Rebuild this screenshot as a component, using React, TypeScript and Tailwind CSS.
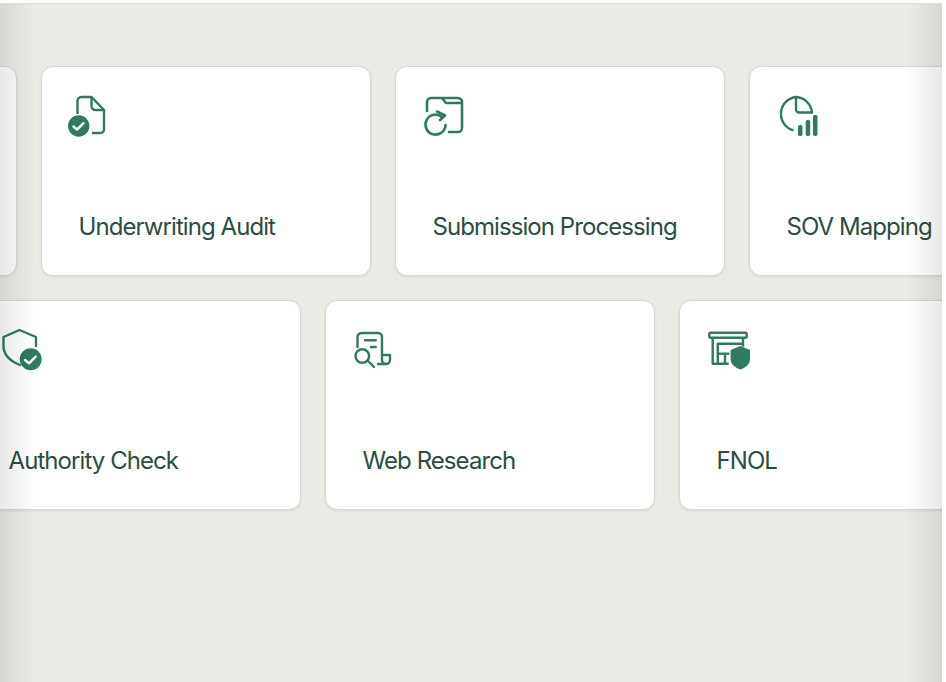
import React from 'react';

const GREEN = '#2f7a61';
const SVG_CLASS = 'overflow-visible';

const DocCheck = () => (
  <svg className={SVG_CLASS} width="44" height="44" viewBox="0 0 44 44" fill="none">
    <path d="M9.500 20V7a4 4 0 0 1 4-4h10l12.500 13v19.500a3.500 3.500 0 0 1-3.500 3.500H24" stroke={GREEN} strokeWidth="2.400" strokeLinejoin="round" />
    <path d="M23.500 3v9a4 4 0 0 0 4 4H36" stroke={GREEN} strokeWidth="2.400" strokeLinejoin="round" />
    <circle cx="10.700" cy="32" r="10.700" fill={GREEN} />
    <path d="M5.500 32.500l3.500 3.200 6.500-6.500" stroke="#fff" strokeWidth="2.400" strokeLinecap="round" strokeLinejoin="round" />
  </svg>
);

const FolderRefresh = () => (
  <svg className={SVG_CLASS} width="44" height="44" viewBox="0 0 44 44" fill="none" stroke={GREEN} strokeWidth="2.600">
    <path d="M5 17V8a4 4 0 0 1 4-4h27a4 4 0 0 1 4 4v26a4 4 0 0 1-4 4h-9" strokeLinecap="round" />
    <path d="M20 4l4 5h16" strokeLinejoin="round" />
    <path d="M20 23a10 10 0 1 0 3.500 8" strokeLinecap="round" />
    <path d="M15 17.500l8 4-5 4.500" strokeLinecap="round" strokeLinejoin="round" />
  </svg>
);

const PieBars = () => (
  <svg className={SVG_CLASS} width="44" height="44" viewBox="0 0 44 44" fill="none">
    <path d="M20 3a17 17 0 0 0-3.500 33" stroke={GREEN} strokeWidth="2.400" strokeLinecap="round" />
    <path d="M20 3a17 17 0 0 1 16 15.500H23a3 3 0 0 1-3-3z" stroke={GREEN} strokeWidth="2.400" strokeLinejoin="round" />
    <rect x="22" y="31" width="4.500" height="11" rx="1.800" fill={GREEN} />
    <rect x="29.700" y="26" width="4.500" height="16" rx="1.800" fill={GREEN} />
    <rect x="37" y="21" width="4.500" height="21" rx="1.800" fill={GREEN} />
  </svg>
);

const ShieldCheck = () => (
  <svg className={SVG_CLASS} width="44" height="44" viewBox="1 0 44 44" fill="none">
    <path d="M23 37C13 33 6.500 27 6.500 18V9l16-7 16.500 7v9" stroke={GREEN} strokeWidth="2.400" strokeLinejoin="round" strokeLinecap="round" />
    <circle cx="33.700" cy="31.300" r="11" fill={GREEN} />
    <path d="M28 32l4 3.300 6.700-6.600" stroke="#fff" strokeWidth="2.400" strokeLinecap="round" strokeLinejoin="round" />
  </svg>
);

const DocSearch = () => (
  <svg className={SVG_CLASS} width="44" height="44" viewBox="1 0 44 44" fill="none" stroke={GREEN} strokeWidth="2.400" strokeLinecap="round" strokeLinejoin="round">
    <path d="M6.500 19V9a4 4 0 0 1 4-4H27a4 4 0 0 1 4 4v23a4 4 0 0 0 4 4 4 4 0 0 0 4-4v-5h-7" />
    <path d="M27 36h8" />
    <path d="M14 12.300h10.700M20 19h4.700" />
    <circle cx="11.300" cy="28" r="6.800" />
    <path d="M16.500 32.500l6.500 6.500" />
  </svg>
);

const StoreShield = () => (
  <svg className={SVG_CLASS} width="44" height="44" viewBox="1 0 44 44" fill="none">
    <g stroke={GREEN} strokeWidth="2.400" strokeLinejoin="round">
      <rect x="4.300" y="4.700" width="37.400" height="5" rx="1.500" />
      <path d="M7.700 9.700v26h16" />
      <path d="M38 9.700v9" />
      <path d="M12.800 35.700V15.700H38" />
      <path d="M12.800 25.700h11.500" />
      <path d="M20 25.700v10" />
    </g>
    <path d="M35.300 18l9.700 4v9c0 5-4 8.500-9.700 10.500-5.700-2-9.700-5.500-9.700-10.500v-9z" fill={GREEN} />
  </svg>
);

const ROW_ONE = [
  { title: '', icon: null },
  { title: 'Underwriting Audit', icon: <DocCheck /> },
  { title: 'Submission Processing', icon: <FolderRefresh /> },
  { title: 'SOV Mapping', icon: <PieBars /> },
];

const ROW_TWO = [
  { title: 'Authority Check', icon: <ShieldCheck /> },
  { title: 'Web Research', icon: <DocSearch /> },
  { title: 'FNOL', icon: <StoreShield /> },
];

function Card({ title, icon }: { title: string; icon: React.ReactNode }) {
  return (
    <div className="w-[330px] h-[210px] shrink-0 rounded-[12px] bg-white border border-[#d9d7d0] shadow-[0_1px_3px_rgba(60,60,50,0.1)] pt-[27px] pl-[26px] flex flex-col">
      <div className="h-[44px]">{icon}</div>
      <div className="mt-[74px] pl-[10.5px] text-[24px] leading-[30px] tracking-[-0.93px] text-[#2b4d42] font-[Inter,sans-serif] whitespace-nowrap">
        {title}
      </div>
    </div>
  );
}

export default function App() {
  return (
    <div className="w-[946px] h-[682px] bg-white overflow-hidden pt-[3px] pr-[4px]">
      <div className="relative h-[679px] bg-[#ecebe6] border-t border-[#e2e0da] overflow-hidden pt-[62px]">
        <div className="flex gap-[24px] ml-[-313px]">
          {ROW_ONE.map((c, i) => (
            <Card key={i} title={c.title} icon={c.icon} />
          ))}
        </div>
        <div className="flex gap-[24px] ml-[-29px] mt-[24px]">
          {ROW_TWO.map((c, i) => (
            <Card key={i} title={c.title} icon={c.icon} />
          ))}
        </div>
        <div className="absolute inset-y-0 left-0 w-[36px] bg-gradient-to-r from-black/[.09] to-transparent" />
        <div className="absolute inset-y-0 right-0 w-[36px] bg-gradient-to-l from-black/[.09] to-transparent" />
      </div>
    </div>
  );
}
